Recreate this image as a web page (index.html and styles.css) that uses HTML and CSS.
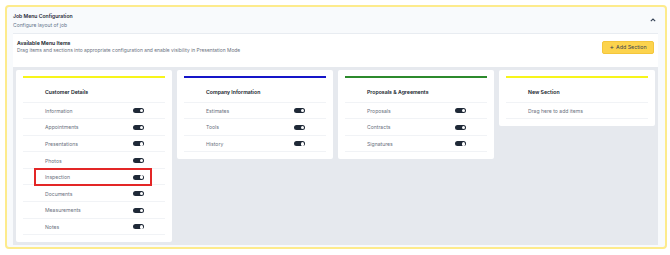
FILE: index.html
```html
<!DOCTYPE html>
<html>
<head>
<meta charset="utf-8">
<link rel="stylesheet" href="styles.css">
</head>
<body>
<div class="frame">
  <div class="head">
    <div class="head-text">
      <div class="title">Job Menu Configuration</div>
      <div class="subtitle">Configure layout of job</div>
    </div>
    <svg class="chevron" width="6" height="4" viewBox="0 0 6 4"><polyline points="0.8,3.2 3,1 5.2,3.2" fill="none" stroke="#334155" stroke-width="1.1"/></svg>
  </div>
  <div class="panel">
    <div class="panel-top">
      <div>
        <div class="panel-title">Available Menu Items</div>
        <div class="panel-sub">Drag items and sections into appropriate configuration and enable visibility in Presentation Mode</div>
      </div>
      <div class="add-btn"><span class="plus">+</span>Add Section</div>
    </div>
    <div class="board">
      <div class="card">
        <div class="bar bar-yellow"></div>
        <div class="card-head">Customer Details</div>
        <div class="row"><span>Information</span><span class="toggle"></span></div>
        <div class="row"><span>Appointments</span><span class="toggle"></span></div>
        <div class="row"><span>Presentations</span><span class="toggle"></span></div>
        <div class="row"><span>Photos</span><span class="toggle"></span></div>
        <div class="row marked"><span>Inspection</span><span class="toggle"></span><span class="mark"></span></div>
        <div class="row"><span>Documents</span><span class="toggle"></span></div>
        <div class="row"><span>Measurements</span><span class="toggle"></span></div>
        <div class="row"><span>Notes</span><span class="toggle"></span></div>
      </div>
      <div class="card">
        <div class="bar bar-blue"></div>
        <div class="card-head">Company Information</div>
        <div class="row"><span>Estimates</span><span class="toggle"></span></div>
        <div class="row"><span>Tools</span><span class="toggle"></span></div>
        <div class="row"><span>History</span><span class="toggle"></span></div>
      </div>
      <div class="card">
        <div class="bar bar-green"></div>
        <div class="card-head">Proposals &amp; Agreements</div>
        <div class="row"><span>Proposals</span><span class="toggle"></span></div>
        <div class="row"><span>Contracts</span><span class="toggle"></span></div>
        <div class="row"><span>Signatures</span><span class="toggle"></span></div>
      </div>
      <div class="card">
        <div class="bar bar-yellow"></div>
        <div class="card-head">New Section</div>
        <div class="row"><span>Drag here to add items</span></div>
      </div>
    </div>
  </div>
</div>
</body>
</html>
```

FILE: styles.css
```css
* { box-sizing: border-box; }
html, body { margin: 0; padding: 0; background: #ffffff; }
body { font-family: Inter, "Noto Sans", sans-serif; color: #111827; }

.frame {
  margin: 5px 3px 0 5px;
  width: 662px;
  height: 244px;
  border: 2px solid #fdeb8c;
  border-radius: 4px;
  background: #f8fafc;
}

.head {
  height: 26px;
  padding: 5px 9px 0 6px;
  display: flex;
  justify-content: space-between;
  align-items: flex-start;
}
.title { font-size: 5.1px; line-height: 8px; font-weight: 600; color: #1f2937; }
.subtitle { font-size: 5px; line-height: 8px; margin-top: 1px; color: #64748b; }
.chevron { margin-top: 6px; }

.panel {
  margin: 0 7px 0 6px;
  border-top: 1px solid #e8ecf1;
}
.panel-top {
  background: #ffffff;
  height: 33px;
  padding: 6px 4px 0 4px;
  display: flex;
  justify-content: space-between;
  align-items: flex-start;
}
.panel-title { font-size: 5.2px; line-height: 7px; font-weight: 600; color: #111827; }
.panel-sub { font-size: 4.9px; line-height: 6px; color: #6b7280; }
.add-btn {
  margin-top: 0.7px;
  width: 52px;
  height: 13px;
  background: #fcd34d;
  border: 0.5px solid #f4c63c;
  border-radius: 2px;
  font-size: 5.3px;
  color: #374151;
  display: flex;
  align-items: center;
  justify-content: center;
  gap: 2px;
}
.plus { font-size: 7px; line-height: 1; margin-top: -1px; }

.board {
  background: #e6e9ee;
  height: 178px;
  padding: 3px;
  display: flex;
  gap: 5px;
  align-items: flex-start;
}
.card {
  width: 156px;
  background: #ffffff;
  border-radius: 2px;
  padding: 6px 7px 7px;
}
.bar { height: 2px; }
.bar-yellow { background: #f7f51a; }
.bar-blue { background: #1515c8; }
.bar-green { background: #2c8a2c; }

.card-head {
  height: 24.5px;
  padding: 9.5px 0 0 22px;
  font-size: 5.2px;
  line-height: 8px;
  font-weight: 600;
  color: #111827;
  border-bottom: 1px solid #f1f3f6;
}
.row {
  position: relative;
  height: 16.6px;
  padding: 1px 21px 0 22px;
  border-bottom: 1px solid #f1f3f6;
  display: flex;
  align-items: center;
  justify-content: space-between;
  font-size: 5.1px;
  color: #6b7280;
}
.toggle {
  position: relative;
  width: 11px;
  height: 5px;
  border-radius: 3px;
  background: #1f2937;
}
.toggle::after {
  content: "";
  position: absolute;
  right: 0.8px;
  top: 0.8px;
  width: 3.4px;
  height: 3.4px;
  border-radius: 50%;
  background: #ffffff;
}
.mark {
  position: absolute;
  left: 11px;
  right: 13px;
  top: -0.5px;
  bottom: -1.5px;
  border: 2px solid #e32626;
}
```
